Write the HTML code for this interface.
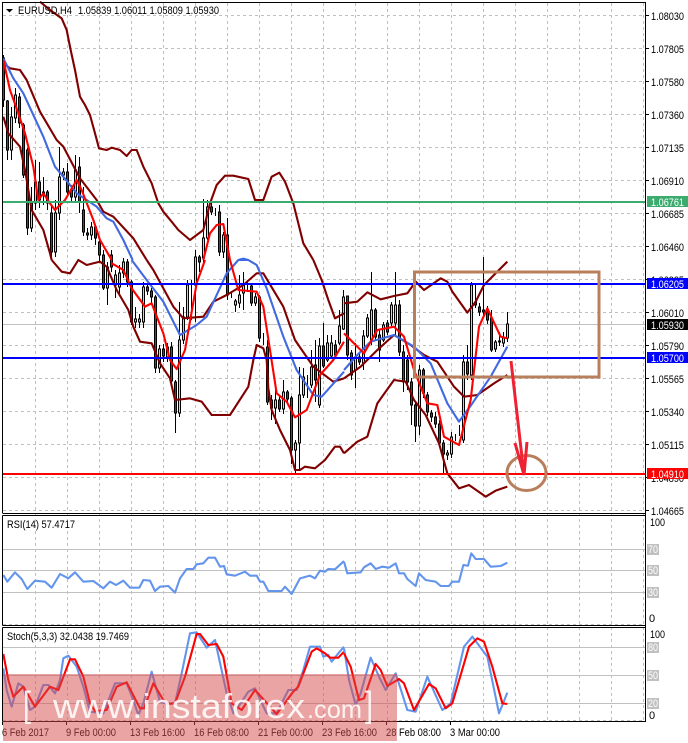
<!DOCTYPE html>
<html><head><meta charset="utf-8"><style>
html,body{margin:0;padding:0;background:#fff;width:688px;height:743px;overflow:hidden}
svg{display:block}
text{font-family:"Liberation Sans",sans-serif;font-size:11px;fill:#000}
.l{fill:#fff}
</style></head><body>
<svg width="688" height="743" viewBox="0 0 688 743" xmlns="http://www.w3.org/2000/svg">
<rect width="688" height="743" fill="#fff"/>
<!-- grid -->
<path shape-rendering="crispEdges" fill="none" stroke="#c0c0c0" stroke-dasharray="3 3" d="M35.5 3V722M67.5 3V722M99.5 3V722M131.5 3V722M163.5 3V722M195.5 3V722M227.5 3V722M259.5 3V722M291.5 3V722M323.5 3V722M355.5 3V722M387.5 3V722M419.5 3V722M451.5 3V722M483.5 3V722M515.5 3V722M547.5 3V722M579.5 3V722M611.5 3V722M643.5 3V722M3 15.5H645M3 48.5H645M3 81.5H645M3 114.5H645M3 147.5H645M3 180.5H645M3 213.5H645M3 246.5H645M3 279.5H645M3 312.5H645M3 345.5H645M3 378.5H645M3 411.5H645M3 444.5H645M3 477.5H645M3 510.5H645M3 624.5H645M3 720.5H645"/>
<path shape-rendering="crispEdges" fill="none" stroke="#c0c0c0" d="M3 324.5H645M3 549.5H645M3 570.5H645M3 592.5H645M3 647.5H645M3 675.5H645M3 703.5H645"/>
<!-- wicks -->
<path shape-rendering="crispEdges" fill="none" stroke="#000" d="M3.5 55V107M7.5 100V160M11.5 107V160M15.5 88V123M19.5 93V128M23.5 123V178M27.5 148V235M31.5 187V232M35.5 160V210M39.5 162V208M43.5 177V205M47.5 190V210M51.5 205V260M55.5 200V257M59.5 147V220M63.5 168V180M67.5 163V197M71.5 185V203M75.5 155V203M79.5 157V213M83.5 187V236M87.5 228V240M91.5 222V240M95.5 225V245M99.5 240V262M103.5 250V290M107.5 262V305M111.5 250V272M115.5 270V298M119.5 265V296M123.5 258V278M127.5 259V287M131.5 280V325M135.5 307V328M139.5 314V328M143.5 282V328M147.5 284V295M151.5 288V305M155.5 295V373M159.5 345V373M163.5 344V362M167.5 343V362M171.5 342V384M175.5 380V433M179.5 302V417M183.5 307V344M187.5 280V320M191.5 280V320M195.5 250V322M199.5 255V272M203.5 199V262M207.5 200V240M211.5 200V215M215.5 208V216M219.5 205V256M223.5 232V258M227.5 218V300M231.5 292V298M235.5 299V312M239.5 275V308M243.5 272V310M247.5 280V292M251.5 283V306M255.5 293V306M259.5 295V342M263.5 333V345M267.5 340V405M271.5 395V420M275.5 387V424M279.5 395V412M283.5 380V414M287.5 390V402M291.5 396V464M295.5 440V473M299.5 367V470M303.5 368V398M307.5 375V398M311.5 350V388M315.5 340V402M319.5 338V408M323.5 323V368M327.5 335V362M331.5 335V358M335.5 340V358M339.5 310V345M343.5 290V330M347.5 296V360M351.5 350V380M355.5 343V388M359.5 352V365M363.5 330V370M367.5 314V338M371.5 272V345M375.5 308V340M379.5 330V362M383.5 322V342M387.5 320V335M391.5 302V326M395.5 272V335M399.5 300V356M403.5 345V392M407.5 355V390M411.5 378V425M415.5 402V442M419.5 365V435M423.5 368V398M427.5 392V416M431.5 410V422M435.5 412V428M439.5 420V447M443.5 440V473M447.5 450V460M451.5 432V458M455.5 434V441M459.5 425V436M463.5 355V443M467.5 345V380M471.5 282V380M475.5 285V308M479.5 303V316M483.5 257V316M487.5 306V324M491.5 310V352M495.5 340V352M499.5 332V346M503.5 332V347M507.5 312V342"/>
<!-- red bodies -->
<path shape-rendering="crispEdges" fill="#ff0000" stroke="#000" d="M2.5 58h2v42h-2zM6.5 101h2v49h-2zM18.5 97h2v26h-2zM22.5 125h2v50h-2zM26.5 150h2v78h-2zM38.5 182h2v18h-2zM46.5 192h2v11h-2zM50.5 213h2v39h-2zM66.5 172h2v20h-2zM70.5 190h2v7h-2zM78.5 167h2v35h-2zM82.5 210h2v22h-2zM86.5 233h2v2h-2zM94.5 227h2v11h-2zM98.5 242h2v13h-2zM102.5 255h2v33h-2zM110.5 255h2v12h-2zM126.5 262h2v20h-2zM130.5 282h2v40h-2zM146.5 287h2v4h-2zM150.5 291h2v6h-2zM154.5 297h2v71h-2zM162.5 349h2v7h-2zM170.5 347h2v34h-2zM174.5 382h2v31h-2zM198.5 257h2v5h-2zM210.5 207h2v5h-2zM218.5 212h2v40h-2zM226.5 235h2v60h-2zM250.5 286h2v17h-2zM258.5 297h2v41h-2zM266.5 347h2v55h-2zM270.5 400h2v8h-2zM278.5 400h2v9h-2zM286.5 392h2v7h-2zM290.5 398h2v52h-2zM314.5 365h2v15h-2zM322.5 346h2v20h-2zM334.5 345h2v10h-2zM346.5 296h2v59h-2zM350.5 353h2v22h-2zM358.5 357h2v5h-2zM374.5 310h2v27h-2zM378.5 335h2v15h-2zM386.5 323h2v9h-2zM398.5 305h2v47h-2zM402.5 352h2v30h-2zM406.5 360h2v22h-2zM410.5 382h2v23h-2zM414.5 405h2v21h-2zM422.5 370h2v23h-2zM426.5 395h2v17h-2zM430.5 413h2v4h-2zM434.5 417h2v7h-2zM438.5 424h2v19h-2zM442.5 443h2v11h-2zM466.5 362h2v12h-2zM474.5 302h2v3h-2zM478.5 307h2v5h-2zM482.5 310h2v2h-2zM486.5 312h2v8h-2zM490.5 318h2v32h-2zM498.5 341h2v1h-2z"/>
<!-- green bodies -->
<path shape-rendering="crispEdges" fill="#adff2f" stroke="#000" d="M10.5 117h2v33h-2zM14.5 95h2v23h-2zM30.5 203h2v25h-2zM34.5 182h2v21h-2zM42.5 192h2v3h-2zM54.5 213h2v39h-2zM58.5 177h2v36h-2zM62.5 172h2v3h-2zM74.5 170h2v27h-2zM90.5 227h2v8h-2zM106.5 267h2v21h-2zM114.5 275h2v10h-2zM118.5 273h2v14h-2zM122.5 262h2v11h-2zM134.5 319h2v3h-2zM138.5 319h2v3h-2zM142.5 287h2v35h-2zM158.5 349h2v19h-2zM166.5 347h2v10h-2zM178.5 340h2v73h-2zM182.5 317h2v23h-2zM186.5 285h2v32h-2zM194.5 257h2v28h-2zM202.5 238h2v20h-2zM206.5 207h2v31h-2zM222.5 235h2v17h-2zM234.5 301h2v4h-2zM238.5 295h2v8h-2zM242.5 285h2v8h-2zM254.5 297h2v6h-2zM274.5 400h2v8h-2zM282.5 392h2v17h-2zM294.5 443h2v7h-2zM298.5 395h2v48h-2zM302.5 377h2v18h-2zM310.5 367h2v18h-2zM318.5 346h2v59h-2zM326.5 343h2v17h-2zM330.5 343h2v13h-2zM338.5 326h2v17h-2zM342.5 297h2v32h-2zM354.5 357h2v13h-2zM362.5 336h2v27h-2zM366.5 318h2v18h-2zM370.5 310h2v30h-2zM382.5 325h2v15h-2zM390.5 305h2v18h-2zM394.5 305h2v18h-2zM418.5 370h2v56h-2zM446.5 453h2v2h-2zM450.5 437h2v17h-2zM462.5 362h2v78h-2zM470.5 285h2v90h-2zM494.5 342h2v7h-2zM502.5 338h2v5h-2zM506.5 324h2v14h-2z"/>
<!-- indicators in zoom coordinates -->
<g fill="none" stroke-linejoin="round" stroke-width="6.3">
<g transform="scale(.33333)">
<polyline stroke="#800000" points="120,5 150,30 185,55 200,90 212,150 225,210 240,290 255,315 270,345 285,400 297,445 320,450 335,443 360,450 380,468 395,450 410,450 430,500 455,550 475,610 490,635 515,665 535,690 570,720 610,690 630,610 650,555 675,527 700,527 745,537 765,600 790,600 815,530 838,518 855,545 880,610 910,730 940,780"/>
<polyline stroke="#800000" points="10,350 25,400 60,440 75,510 95,630 130,690 150,760 155,780"/>
<polyline stroke="#800000" points="10,190 30,205 60,210 80,240 120,335 170,420 190,440 240,535 290,600 310,635 340,650 400,715 440,780"/>
<polyline stroke="#4169e1" points="10,175 40,235 70,280 100,345 130,410 165,500 190,530 230,580 290,620 320,655 340,665 370,720 398,780"/>
<polyline stroke="#4169e1" points="715,780 730,776 745,780"/>
<polyline stroke="#ff0000" points="10,180 30,270 55,340 75,400 100,500 115,600 130,580 150,610 165,630 195,600 230,540 245,570 280,660 300,720 335,780"/>
<polyline stroke="#ff0000" points="610,780 630,700 650,675 670,672 690,780"/>
</g>
<g transform="translate(0 260) scale(.33333)">
<polyline stroke="#800000" points="940,0 965,60 985,120 1005,175 1032,160"/>
<polyline stroke="#800000" points="155,0 185,35 210,40 235,0 260,15 300,5 320,20 350,90 385,150 400,200 420,245 455,250 480,310 510,355 525,420 570,415 605,425 635,465 690,465 745,380 760,300 770,255 790,265 800,300 805,385 815,450 840,510 870,570 885,630 900,630 915,620 945,625 975,600 1005,560 1020,560 1032,580"/>
<polyline stroke="#800000" points="440,0 460,30 520,140 550,175 610,170 640,125 680,105 730,75 770,40 790,40 850,140 885,240 940,320 1000,365 1032,355"/>
<polyline stroke="#4169e1" points="395,0 440,60 490,125 540,225 590,195 620,170 680,40 715,0 745,0 770,15 800,85 850,230 890,330 940,405 965,410 1032,335"/>
<polyline stroke="#ff0000" points="335,10 370,30 395,85 435,140 455,130 490,220 510,300 530,327 555,270 590,70 615,0"/>
<polyline stroke="#ff0000" points="690,0 715,90 770,95 790,140 810,270 830,400 860,425 885,472 920,450 960,345 1000,300 1032,245"/>
</g>
<g transform="translate(344 260) scale(.33333)">
<polyline stroke="#800000" points="0,130 40,125 70,97 110,118 150,108 190,100 215,65 240,90 290,55 310,65 325,95 370,158 395,125 420,75 460,35 490,5"/>
<polyline stroke="#800000" points="0,580 40,545 70,530 100,430 150,360 185,365 210,420 245,465 285,550 310,640 345,685 375,675 425,710 455,692 490,680"/>
<polyline stroke="#800000" points="0,355 50,320 100,270 150,225 200,255 240,285 280,305 330,380 360,410 400,405 450,370 490,345"/>
<polyline stroke="#4169e1" points="0,330 40,285 80,245 150,225 210,260 260,310 310,430 345,485 385,430 440,350 490,260"/>
<polyline stroke="#ff0000" points="0,220 60,280 100,210 150,200 180,230 210,330 250,430 280,435 300,530 345,555 380,420 405,200 430,145 470,230 490,235"/>
</g>
<g transform="translate(0 510) scale(.33333)" stroke="#6495ed">
<polyline points="10,195 22,215 45,187 65,207 82,237 105,212 135,215 155,233 180,192 205,205 225,187 250,215 280,213 310,235 330,215 348,225 370,212 390,233 418,233 430,210 450,212 465,243 480,230 505,228 525,248 540,205 560,177 580,177 590,163 610,160 625,143 645,143 660,170 672,168 680,193 705,197 735,185 750,197 770,197 780,215 790,215 805,243 845,243 855,230 875,252 900,205 930,197 945,205 960,182 975,185 985,177 1005,178 1032,153"/>
<polyline points="10,475 20,540 35,590 55,520 70,530 90,600 105,590 130,525 145,525 165,550 180,510 190,445 205,437 230,470 250,530 270,605 310,610 345,520 380,520 400,570 415,615 430,580 455,485 480,575 495,580 525,580 545,490 570,370 590,367 620,413 645,390 680,550 700,610 715,590 745,545 765,535 800,610 830,610 865,540 890,540 910,480 930,410 960,410 970,440 985,435 995,455 1015,430 1032,410"/>
<polyline stroke="#ff0000" points="10,432 25,510 40,560 70,530 105,590 150,530 175,540 210,448 225,448 250,500 270,580 285,603 320,600 350,530 380,517 420,595 432,595 460,520 490,570 505,582 525,580 555,500 590,372 600,372 625,405 650,402 670,440 695,580 725,600 765,540 830,612 880,545 895,530 935,425 950,415 975,430 990,443 1015,443 1032,425"/>
</g>
<g transform="translate(344 510) scale(.33333)" stroke="#6495ed">
<polyline points="0,155 10,190 50,187 60,172 80,160 95,177 115,170 135,173 155,160 165,190 180,190 190,207 215,228 225,190 245,210 275,215 290,228 315,228 325,215 345,215 358,165 372,167 382,130 395,147 420,147 440,170 470,168 490,158"/>
<polyline points="0,415 15,510 35,585 50,550 80,443 105,500 125,540 155,490 190,600 215,605 250,500 295,600 320,580 360,410 385,380 430,440 465,610 490,548"/>
<polyline stroke="#ff0000" points="0,430 20,470 45,570 60,565 95,462 110,480 130,528 165,507 180,520 210,600 255,522 275,535 305,595 325,580 375,410 400,385 420,395 445,470 475,580 490,582"/>
</g>
</g>
<!-- level lines -->
<g shape-rendering="crispEdges">
<rect x="3" y="201" width="642" height="2" fill="#3cab6e"/>
<rect x="3" y="283" width="642" height="2" fill="#0000ff"/>
<rect x="3" y="357" width="642" height="2" fill="#0000ff"/>
<rect x="3" y="473" width="642" height="2" fill="#ff0000"/>
</g>
<!-- drawn annotations -->
<rect x="414.5" y="272" width="184.5" height="105" fill="none" stroke="#b97f5c" stroke-width="3"/>
<ellipse cx="526.5" cy="473" rx="19.5" ry="17.5" fill="none" stroke="#b97f5c" stroke-width="3"/>
<path d="M511 361L524 475M515 443L524 475L527 442" fill="none" stroke="#ee2233" stroke-width="3"/>
<!-- frames -->
<path shape-rendering="crispEdges" fill="none" stroke="#000" d="M2.5 513.5V2.5H645.5V722M2.5 515.5H645.5M2.5 625.5V515.5M2.5 625.5H645.5M2.5 627.5H645.5M2.5 721.5V627.5M2.5 721.5H645.5M645 15.5h4M645 48.5h4M645 81.5h4M645 114.5h4M645 147.5h4M645 180.5h4M645 213.5h4M645 246.5h4M645 279.5h4M645 312.5h4M645 345.5h4M645 378.5h4M645 411.5h4M645 444.5h4M645 477.5h4M645 510.5h4M2.5 722v3M66.5 722v3M130.5 722v3M194.5 722v3M258.5 722v3M322.5 722v3M386.5 722v3M450.5 722v3M3 513.5H645"/>
<path d="M6 9h7l-3.5 3.5z" fill="#000"/>
<!-- title and panel labels -->
<text x="18" y="14" textLength="54" lengthAdjust="spacingAndGlyphs">EURUSD,H4</text>
<text x="78" y="14" textLength="141" lengthAdjust="spacingAndGlyphs">1.05839 1.06011 1.05809 1.05930</text>
<text x="7" y="528" textLength="68" lengthAdjust="spacingAndGlyphs">RSI(14) 57.4717</text>
<text x="7" y="640" textLength="122" lengthAdjust="spacingAndGlyphs">Stoch(5,3,3) 32.0438 19.7469</text>
<!-- price axis -->
<g>
<text x="651" y="20" textLength="33" lengthAdjust="spacingAndGlyphs">1.08030</text>
<text x="651" y="53" textLength="33" lengthAdjust="spacingAndGlyphs">1.07805</text>
<text x="651" y="86" textLength="33" lengthAdjust="spacingAndGlyphs">1.07580</text>
<text x="651" y="119" textLength="33" lengthAdjust="spacingAndGlyphs">1.07360</text>
<text x="651" y="152" textLength="33" lengthAdjust="spacingAndGlyphs">1.07135</text>
<text x="651" y="185" textLength="33" lengthAdjust="spacingAndGlyphs">1.06910</text>
<text x="651" y="218" textLength="33" lengthAdjust="spacingAndGlyphs">1.06685</text>
<text x="651" y="251" textLength="33" lengthAdjust="spacingAndGlyphs">1.06460</text>
<text x="651" y="284" textLength="33" lengthAdjust="spacingAndGlyphs">1.06235</text>
<text x="651" y="317" textLength="33" lengthAdjust="spacingAndGlyphs">1.06010</text>
<text x="651" y="350" textLength="33" lengthAdjust="spacingAndGlyphs">1.05790</text>
<text x="651" y="383" textLength="33" lengthAdjust="spacingAndGlyphs">1.05565</text>
<text x="651" y="416" textLength="33" lengthAdjust="spacingAndGlyphs">1.05340</text>
<text x="651" y="449" textLength="33" lengthAdjust="spacingAndGlyphs">1.05115</text>
<text x="651" y="482" textLength="33" lengthAdjust="spacingAndGlyphs">1.04890</text>
<text x="651" y="515" textLength="33" lengthAdjust="spacingAndGlyphs">1.04665</text>
<g shape-rendering="crispEdges">
<rect x="647" y="196" width="41" height="11" fill="#3cab6e"/>
<rect x="647" y="278" width="41" height="11" fill="#0000ff"/>
<rect x="647" y="319" width="41" height="11" fill="#000"/>
<rect x="647" y="352" width="41" height="11" fill="#0000ff"/>
<rect x="647" y="468" width="41" height="11" fill="#ff0000"/>
</g>
<text class="l" x="651" y="206" textLength="33" lengthAdjust="spacingAndGlyphs">1.06761</text>
<text class="l" x="651" y="288" textLength="33" lengthAdjust="spacingAndGlyphs">1.06205</text>
<text class="l" x="651" y="329" textLength="33" lengthAdjust="spacingAndGlyphs">1.05930</text>
<text class="l" x="651" y="362" textLength="33" lengthAdjust="spacingAndGlyphs">1.05700</text>
<text class="l" x="651" y="478" textLength="33" lengthAdjust="spacingAndGlyphs">1.04910</text>
</g>
<!-- oscillator axes -->
<g shape-rendering="crispEdges" fill="#c0c0c0">
<rect x="647" y="544" width="12" height="11"/><rect x="647" y="565" width="12" height="11"/><rect x="647" y="587" width="12" height="11"/>
<rect x="647" y="642" width="12" height="11"/><rect x="647" y="670" width="12" height="11"/><rect x="647" y="698" width="12" height="11"/>
</g>
<text x="650" y="526" textLength="15" lengthAdjust="spacingAndGlyphs">100</text>
<text class="l" x="648" y="553" textLength="10" lengthAdjust="spacingAndGlyphs">70</text><text class="l" x="648" y="574" textLength="10" lengthAdjust="spacingAndGlyphs">50</text><text class="l" x="648" y="596" textLength="10" lengthAdjust="spacingAndGlyphs">30</text>
<text x="649" y="622">0</text>
<text x="650" y="638" textLength="15" lengthAdjust="spacingAndGlyphs">100</text>
<text class="l" x="648" y="651" textLength="10" lengthAdjust="spacingAndGlyphs">80</text><text class="l" x="648" y="679" textLength="10" lengthAdjust="spacingAndGlyphs">50</text><text class="l" x="648" y="707" textLength="10" lengthAdjust="spacingAndGlyphs">20</text>
<text x="649" y="719">0</text>
<!-- time axis -->
<text x="2" y="736" textLength="47" lengthAdjust="spacingAndGlyphs">6 Feb 2017</text>
<text x="66" y="736" textLength="50" lengthAdjust="spacingAndGlyphs">9 Feb 00:00</text>
<text x="130" y="736" textLength="55" lengthAdjust="spacingAndGlyphs">13 Feb 16:00</text>
<text x="194" y="736" textLength="55" lengthAdjust="spacingAndGlyphs">16 Feb 08:00</text>
<text x="258" y="736" textLength="55" lengthAdjust="spacingAndGlyphs">21 Feb 00:00</text>
<text x="322" y="736" textLength="55" lengthAdjust="spacingAndGlyphs">23 Feb 16:00</text>
<text x="386" y="736" textLength="55" lengthAdjust="spacingAndGlyphs">28 Feb 08:00</text>
<text x="450" y="736" textLength="50" lengthAdjust="spacingAndGlyphs">3 Mar 00:00</text>
<!-- watermark -->
<rect x="3" y="674" width="394" height="67" fill="#d84a4a" fill-opacity=".5"/>
<g opacity=".88">
<text x="23" y="716.5" style="font-size:36px;fill:#fff" textLength="8" lengthAdjust="spacingAndGlyphs">[</text>
<text x="53" y="718" style="font-size:34px;fill:#fff" textLength="252" lengthAdjust="spacingAndGlyphs">www.instaforex</text>
<text x="307" y="718" style="font-size:25px;fill:#fff" textLength="55" lengthAdjust="spacingAndGlyphs">.com</text>
<text x="365" y="716.5" style="font-size:36px;fill:#fff" textLength="8" lengthAdjust="spacingAndGlyphs">]</text>
</g>
</svg>
</body></html>
